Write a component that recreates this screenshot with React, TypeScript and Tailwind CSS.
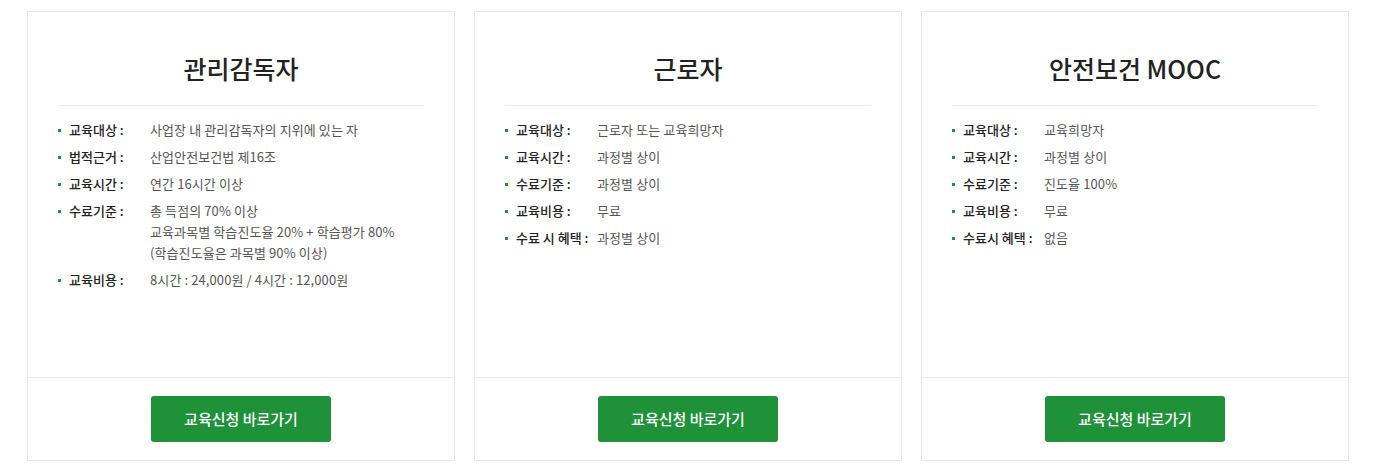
import React from 'react';

type Row = { label: string; value: string[] };
type Course = { title: string; rows: Row[] };

const courses: Course[] = [
  {
    title: '관리감독자',
    rows: [
      { label: '교육대상 :', value: ['사업장 내 관리감독자의 지위에 있는 자'] },
      { label: '법적근거 :', value: ['산업안전보건법 제16조'] },
      { label: '교육시간 :', value: ['연간 16시간 이상'] },
      {
        label: '수료기준 :',
        value: ['총 득점의 70% 이상', '교육과목별 학습진도율 20% + 학습평가 80%', '(학습진도율은 과목별 90% 이상)'],
      },
      { label: '교육비용 :', value: ['8시간 : 24,000원 / 4시간 : 12,000원'] },
    ],
  },
  {
    title: '근로자',
    rows: [
      { label: '교육대상 :', value: ['근로자 또는 교육희망자'] },
      { label: '교육시간 :', value: ['과정별 상이'] },
      { label: '수료기준 :', value: ['과정별 상이'] },
      { label: '교육비용 :', value: ['무료'] },
      { label: '수료 시 혜택 :', value: ['과정별 상이'] },
    ],
  },
  {
    title: '안전보건 MOOC',
    rows: [
      { label: '교육대상 :', value: ['교육희망자'] },
      { label: '교육시간 :', value: ['과정별 상이'] },
      { label: '수료기준 :', value: ['진도율 100%'] },
      { label: '교육비용 :', value: ['무료'] },
      { label: '수료시 혜택 :', value: ['없음'] },
    ],
  },
];

const CourseCard: React.FC<{ course: Course }> = ({ course }) => (
  <div className="w-[428px] h-[450px] flex flex-col border border-[#e8e8e8] bg-white">
    <div className="flex-1 px-[30px]">
      <h2 className="pt-[38px] pb-[19px] text-center text-[25px] leading-[36px] font-medium text-[#222] border-b border-[#ebebeb]">
        {course.title}
      </h2>
      <ul className="mt-[13px] flex flex-col gap-[6px]">
        {course.rows.map((row) => (
          <li key={row.label} className="flex text-[13px] leading-[21px]">
            <span className="w-[3px] h-[3px] bg-[#1e9139] mt-[10px] mr-[8px] shrink-0" />
            <span className="min-w-[81px] shrink-0 pr-[3px] font-medium text-[#222] whitespace-nowrap">{row.label}</span>
            <span className="text-[#555] tracking-[0.1px]">
              {row.value.map((v) => (
                <span key={v} className="block">
                  {v}
                </span>
              ))}
            </span>
          </li>
        ))}
      </ul>
    </div>
    <div className="h-[83px] border-t border-[#ebebeb] flex items-center justify-center">
      <button className="w-[180px] h-[46px] rounded-[3px] bg-[#1e9139] text-white text-[15px] font-medium">
        교육신청 바로가기
      </button>
    </div>
  </div>
);

const App: React.FC = () => {
  return (
    <div
      className="min-h-screen bg-white pt-[11px] pl-[27px]"
      style={{ fontFamily: '"Noto Sans CJK KR", "Noto Sans", sans-serif' }}
    >
      <div className="flex gap-[19px]">
        {courses.map((c) => (
          <CourseCard key={c.title} course={c} />
        ))}
      </div>
    </div>
  );
};

export default App;
